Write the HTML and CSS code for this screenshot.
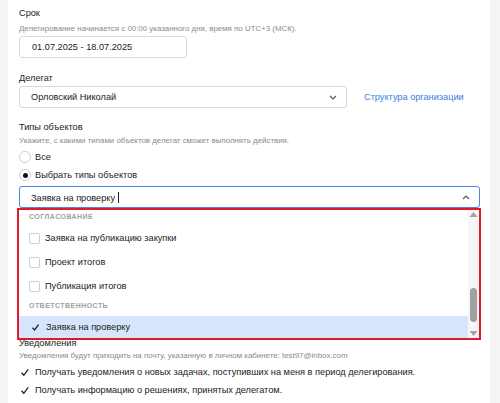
FILE: index.html
```html
<!DOCTYPE html>
<html lang="ru">
<head>
<meta charset="utf-8">
<link rel="stylesheet" href="styles.css">
</head>
<body>
<div class="page">
  <div class="panel">
    <div class="label l-srok">Срок</div>
    <div class="hint h-srok">Делегирование начинается с 00:00 указанного дня, время по UTC+3 (МСК).</div>
    <div class="field date">01.07.2025 - 18.07.2025</div>

    <div class="label l-del">Делегат</div>
    <div class="row-del">
      <div class="field select">
        <span>Орловский Николай</span>
        <svg class="chev" width="8" height="5" viewBox="0 0 8 5"><path d="M1 1 L4 4 L7 1" fill="none" stroke="#555" stroke-width="1.1"/></svg>
      </div>
      <a class="link">Структура организации</a>
    </div>

    <div class="label l-types">Типы объектов</div>
    <div class="hint h-types">Укажите, с какими типами объектов делегат сможет выполнять действия.</div>
    <div class="radio r1"><span class="rb"></span><span>Все</span></div>
    <div class="radio r2"><span class="rb on"></span><span>Выбрать типы объектов</span></div>

    <div class="combo-wrap">
      <div class="field combo">
        <span>Заявка на проверку <span class="caret"></span></span>
        <svg class="chev" width="8" height="5" viewBox="0 0 8 5"><path d="M1 4 L4 1 L7 4" fill="none" stroke="#555" stroke-width="1.1"/></svg>
      </div>
      <div class="dropdown">
        <div class="list">
          <div class="group g1">СОГЛАСОВАНИЕ</div>
          <div class="opt"><span class="cb"></span><span>Заявка на публикацию закупки</span></div>
          <div class="opt"><span class="cb"></span><span>Проект итогов</span></div>
          <div class="opt"><span class="cb"></span><span>Публикация итогов</span></div>
          <div class="group g2">ОТВЕТСТВЕННОСТЬ</div>
          <div class="opt sel"><svg class="ck" width="11" height="11" viewBox="0 0 11 11"><path d="M2.5 5.8 L4.6 8 L8.6 2.6" fill="none" stroke="#222" stroke-width="1.3"/></svg><span>Заявка на проверку</span></div>
        </div>
        <div class="sbar">
          <svg width="11" height="9" viewBox="0 0 11 9"><path d="M1.5 7 L5.5 2 L9.5 7 Z" fill="#a3a3a3"/></svg>
          <div class="track"><div class="thumb"></div></div>
          <svg width="11" height="9" viewBox="0 0 11 9"><path d="M1.5 2 L5.5 7 L9.5 2 Z" fill="#a3a3a3"/></svg>
        </div>
      </div>
    </div>

    <div class="label l-notif">Уведомления</div>
    <div class="hint h-notif">Уведомления будут приходить на почту, указанную в личном кабинете: test97@inbox.com</div>
    <div class="check c1"><svg class="ck2" width="11" height="11" viewBox="0 0 11 11"><path d="M1.5 5.8 L3.8 8.3 L8.2 2.4" fill="none" stroke="#222" stroke-width="1.3"/></svg><span>Получать уведомления о новых задачах, поступивших на меня в период делегирования.</span></div>
    <div class="check c2"><svg class="ck2" width="11" height="11" viewBox="0 0 11 11"><path d="M1.5 5.8 L3.8 8.3 L8.2 2.4" fill="none" stroke="#222" stroke-width="1.3"/></svg><span>Получать информацию о решениях, принятых делегатом.</span></div>
  </div>
</div>
</body>
</html>
```
FILE: styles.css
```css
html, body {
  margin: 0;
  padding: 0;
}
body {
  background: #f4f4f4;
  font-family: "Liberation Sans", Arial, sans-serif;
  color: #222;
  font-size: 9.2px;
}
.page {
  width: 500px;
  height: 403px;
  overflow: hidden;
}
.panel {
  margin-left: 8px;
  width: 482px;
  height: 403px;
  background: #fff;
  box-sizing: border-box;
  padding: 7px 0 0 11px;
  display: flex;
  flex-direction: column;
  align-items: flex-start;
}
.label {
  font-size: 9.2px;
  line-height: 12px;
  color: #222;
}
.hint {
  font-size: 7.9px;
  line-height: 10px;
  color: #8a8a8a;
}
.h-srok { margin-top: 5px; }
.field {
  box-sizing: border-box;
  height: 22px;
  border: 1px solid #d9d9d9;
  border-radius: 3px;
  background: #fff;
  display: flex;
  align-items: center;
  font-size: 9.2px;
  color: #222;
}
.date {
  margin-top: 2px;
  width: 168px;
  padding-left: 12px;
}
.l-del { margin-top: 14px; }
.row-del {
  margin-top: 2px;
  display: flex;
  align-items: center;
}
.select {
  width: 328px;
  padding: 0 9px 0 11px;
  justify-content: space-between;
}
.link {
  margin-left: 17px;
  color: #3a7ddc;
  font-size: 9.2px;
}
.l-types { margin-top: 13px; }
.h-types { margin-top: 3px; }
.radio {
  display: flex;
  align-items: center;
  height: 14px;
  font-size: 9.2px;
}
.r1 { margin-top: 4px; }
.r2 { margin-top: 4px; }
.rb {
  box-sizing: border-box;
  width: 12px;
  height: 12px;
  border: 1px solid #cfcfcf;
  border-radius: 50%;
  margin-right: 4px;
  display: flex;
  align-items: center;
  justify-content: center;
}
.rb.on::after {
  content: "";
  width: 5px;
  height: 5px;
  border-radius: 50%;
  background: #111;
}
.combo-wrap {
  position: relative;
  margin-top: 4px;
}
.combo {
  width: 461px;
  border: 1px solid #4a86e8;
  padding: 0 9px 0 11px;
  justify-content: space-between;
}
.caret {
  display: inline-block;
  width: 1px;
  height: 11px;
  background: #222;
  vertical-align: -2px;
}
.dropdown {
  position: absolute;
  left: -2px;
  top: 22px;
  width: 464px;
  height: 132px;
  box-sizing: border-box;
  border: 2px solid #e0192b;
  background: #fff;
  display: flex;
  z-index: 5;
}
.list {
  flex: 1;
  display: flex;
  flex-direction: column;
}
.group {
  font-size: 7px;
  font-weight: bold;
  letter-spacing: 0.45px;
  color: #a0a0a0;
  padding-left: 10px;
  box-sizing: border-box;
}
.g1 { height: 16px; line-height: 14px; }
.g2 { height: 18px; line-height: 16px; }
.opt {
  height: 24px;
  display: flex;
  align-items: center;
  padding-left: 10px;
  font-size: 9.2px;
}
.opt.sel {
  height: 22px;
  background: #d6e5fb;
}
.cb {
  box-sizing: border-box;
  width: 11px;
  height: 11px;
  border: 1px solid #cfcfcf;
  border-radius: 2px;
  margin-right: 5px;
}
.ck {
  margin-right: 5px;
  margin-left: 1px;
}
.sbar {
  width: 11px;
  background: #f6f6f6;
  display: flex;
  flex-direction: column;
  align-items: center;
}
.sbar svg { display: block; }
.track {
  flex: 1;
  position: relative;
  width: 11px;
}
.thumb {
  position: absolute;
  left: 2px;
  top: 69px;
  width: 7px;
  height: 34px;
  border-radius: 4px;
  background: #a0a0a0;
}
.l-notif { margin-top: 129px; }
.h-notif { margin-top: 2px; }
.check {
  display: flex;
  align-items: center;
  height: 14px;
  font-size: 9.2px;
}
.c1 { margin-top: 4px; }
.c2 { margin-top: 4px; }
.ck2 {
  margin-left: 1px;
  margin-right: 4px;
}
```
